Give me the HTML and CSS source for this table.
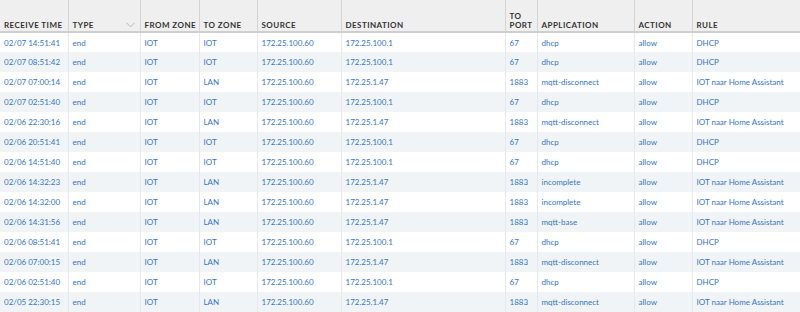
FILE: index.html
```html
<!DOCTYPE html>
<html lang="en">
<head>
    <meta charset="UTF-8">
    <title>Traffic Logs</title>
    <link rel="stylesheet" href="styles.css">
</head>
<body>
    <table class="log-table">
        <colgroup>
            <col style="width: 68px">
            <col style="width: 72px">
            <col style="width: 59px">
            <col style="width: 58px">
            <col style="width: 84px">
            <col style="width: 164px">
            <col style="width: 32px">
            <col style="width: 97px">
            <col style="width: 58px">
            <col>
        </colgroup>
        <thead>
            <tr>
                <th>Receive Time</th>
                <th class="has-filter">Type
                    <svg class="chevron" width="9" height="6" viewBox="0 0 9 6"><path d="M0.5 0.8 L4.5 4.8 L8.5 0.8" fill="none" stroke="#b8b8b8" stroke-width="1"/></svg>
                </th>
                <th>From Zone</th>
                <th>To Zone</th>
                <th>Source</th>
                <th>Destination</th>
                <th>To<br>Port</th>
                <th>Application</th>
                <th>Action</th>
                <th>Rule</th>
            </tr>
        </thead>
        <tbody id="rows"></tbody>
    </table>

    <script>
        const logs = [
            ['02/07 14:51:41', 'IOT', '172.25.100.1', '67', 'dhcp', 'DHCP'],
            ['02/07 08:51:42', 'IOT', '172.25.100.1', '67', 'dhcp', 'DHCP'],
            ['02/07 07:00:14', 'LAN', '172.25.1.47', '1883', 'mqtt-disconnect', 'IOT naar Home Assistant'],
            ['02/07 02:51:40', 'IOT', '172.25.100.1', '67', 'dhcp', 'DHCP'],
            ['02/06 22:30:16', 'LAN', '172.25.1.47', '1883', 'mqtt-disconnect', 'IOT naar Home Assistant'],
            ['02/06 20:51:41', 'IOT', '172.25.100.1', '67', 'dhcp', 'DHCP'],
            ['02/06 14:51:40', 'IOT', '172.25.100.1', '67', 'dhcp', 'DHCP'],
            ['02/06 14:32:23', 'LAN', '172.25.1.47', '1883', 'incomplete', 'IOT naar Home Assistant'],
            ['02/06 14:32:00', 'LAN', '172.25.1.47', '1883', 'incomplete', 'IOT naar Home Assistant'],
            ['02/06 14:31:56', 'LAN', '172.25.1.47', '1883', 'mqtt-base', 'IOT naar Home Assistant'],
            ['02/06 08:51:41', 'IOT', '172.25.100.1', '67', 'dhcp', 'DHCP'],
            ['02/06 07:00:15', 'LAN', '172.25.1.47', '1883', 'mqtt-disconnect', 'IOT naar Home Assistant'],
            ['02/06 02:51:40', 'IOT', '172.25.100.1', '67', 'dhcp', 'DHCP'],
            ['02/05 22:30:15', 'LAN', '172.25.1.47', '1883', 'mqtt-disconnect', 'IOT naar Home Assistant']
        ];

        const tbody = document.getElementById('rows');
        logs.forEach(([time, toZone, dest, port, app, rule]) => {
            const cells = [time, 'end', 'IOT', toZone, '172.25.100.60', dest, port, app, 'allow', rule];
            const tr = document.createElement('tr');
            cells.forEach(text => {
                const td = document.createElement('td');
                td.textContent = text;
                tr.appendChild(td);
            });
            tbody.appendChild(tr);
        });
    </script>
</body>
</html>
```

FILE: styles.css
```css
* {
    margin: 0;
    padding: 0;
    box-sizing: border-box;
}

body {
    font-family: 'Lato', 'Liberation Sans', sans-serif;
    background: white;
    width: 800px;
    overflow: hidden;
}

.log-table {
    width: 800px;
    border-collapse: collapse;
    table-layout: fixed;
}

.log-table th {
    background: #efefef;
    color: #333;
    font-size: 8px;
    font-weight: bold;
    letter-spacing: 0.45px;
    text-transform: uppercase;
    text-align: left;
    vertical-align: bottom;
    line-height: 9px;
    height: 32px;
    padding: 0 4px 1px;
    border-right: 1px solid #d4d4d4;
    border-bottom: 2px solid #cfcfcf;
    white-space: nowrap;
}

.log-table th:last-child {
    border-right: none;
}

.has-filter {
    position: relative;
}

.chevron {
    position: absolute;
    right: 5px;
    bottom: 3px;
}

.log-table td {
    height: 20px;
    padding: 0 4px;
    font-size: 8px;
    color: #3674c4;
    border-right: 1px solid #e6e9ec;
    white-space: nowrap;
    overflow: hidden;
}

.log-table td:last-child {
    border-right: none;
}

.log-table tbody tr:nth-child(even) td {
    background: #f0f4f7;
}
```
